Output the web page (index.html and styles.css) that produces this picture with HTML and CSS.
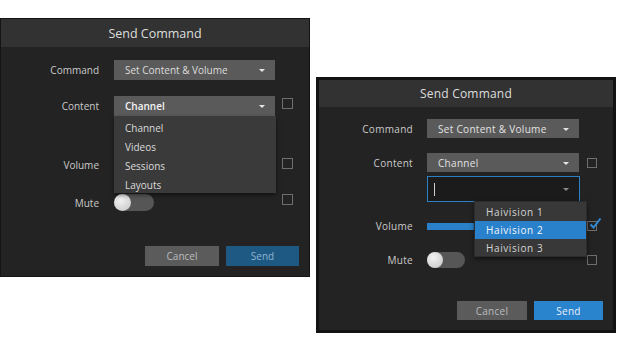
FILE: index.html
```html
<!DOCTYPE html>
<html lang="en">
<head>
    <meta charset="UTF-8">
    <meta name="viewport" content="width=device-width, initial-scale=1.0">
    <title>Send Command</title>
    <link rel="stylesheet" href="styles.css">
</head>
<body>
    <div class="page">
        <!-- content menu open -->
        <section class="dialog dialog-a">
            <header class="dialog-head">Send Command</header>
            <div class="dialog-body">
                <div class="row row-command">
                    <span class="row-label">Command</span>
                    <div class="select"><span>Set Content &amp; Volume</span><i class="caret"></i></div>
                </div>
                <div class="row row-content">
                    <span class="row-label">Content</span>
                    <div class="select select-open">
                        <span class="strong">Channel</span><i class="caret"></i>
                        <ul class="menu">
                            <li>Channel</li>
                            <li>Videos</li>
                            <li>Sessions</li>
                            <li>Layouts</li>
                        </ul>
                    </div>
                    <span class="check"></span>
                </div>
                <div class="row row-sub">
                    <span></span>
                    <div class="combo"></div>
                </div>
                <div class="row row-volume">
                    <span class="row-label">Volume</span>
                    <div class="slider"></div>
                    <span class="check"></span>
                </div>
                <div class="row row-mute">
                    <span class="row-label">Mute</span>
                    <div class="toggle"><i class="knob"></i></div>
                    <span class="check"></span>
                </div>
                <div class="actions">
                    <button class="btn btn-cancel">Cancel</button>
                    <button class="btn btn-send">Send</button>
                </div>
            </div>
        </section>

        <!-- channel picker open -->
        <section class="dialog dialog-b">
            <header class="dialog-head">Send Command</header>
            <div class="dialog-body">
                <div class="row row-command">
                    <span class="row-label">Command</span>
                    <div class="select"><span>Set Content &amp; Volume</span><i class="caret"></i></div>
                </div>
                <div class="row row-content">
                    <span class="row-label">Content</span>
                    <div class="select"><span>Channel</span><i class="caret"></i></div>
                    <span class="check"></span>
                </div>
                <div class="row row-sub">
                    <span></span>
                    <div class="combo combo-focus">
                        <i class="cursor"></i><i class="caret caret-dim"></i>
                        <ul class="menu menu-small">
                            <li>Haivision 1</li>
                            <li class="active">Haivision 2</li>
                            <li>Haivision 3</li>
                        </ul>
                    </div>
                </div>
                <div class="row row-volume">
                    <span class="row-label">Volume</span>
                    <div class="slider slider-on"></div>
                    <span class="check checked">
                        <svg width="14" height="14" viewBox="0 0 14 14"><path d="M2.5 7.5 L5.5 10.5 L12.5 1.5" fill="none" stroke="#2f8ad6" stroke-width="2"/></svg>
                    </span>
                </div>
                <div class="row row-mute">
                    <span class="row-label">Mute</span>
                    <div class="toggle"><i class="knob"></i></div>
                    <span class="check"></span>
                </div>
                <div class="actions">
                    <button class="btn btn-cancel">Cancel</button>
                    <button class="btn btn-send">Send</button>
                </div>
            </div>
        </section>
    </div>
</body>
</html>
```

FILE: styles.css
```css
body {
    margin: 0;
    background: #fff;
    font-family: "Open Sans", "DejaVu Sans", sans-serif;
}
.page {
    display: flex;
    align-items: flex-start;
    gap: 6px;
    padding-top: 18px;
}
.dialog {
    box-sizing: border-box;
    display: flex;
    flex-direction: column;
    background: #232323;
    color: #c8c8c8;
}
.dialog-a {
    width: 310px;
    height: 259px;
    border: 1px solid #141414;
    --label-w: 113px;
    --label-pad: 15px;
    --ctl-w: 161px;
    --ctl-h: 20px;
    --box: 11px;
    --box-gap: 7px;
    --box-top: 2px;
}
.dialog-b {
    width: 300px;
    height: 256px;
    margin-top: 59px;
    border: 3px solid #131313;
    letter-spacing: 0.3px;
    --label-w: 108px;
    --label-pad: 14px;
    --ctl-w: 152px;
    --ctl-h: 19px;
    --box: 10px;
    --box-gap: 8px;
    --box-top: 5px;
}
.dialog-head {
    background: #323232;
    color: #dedede;
    text-align: center;
    font-size: 12.5px;
}
.dialog-a .dialog-head {
    height: 28px;
    line-height: 29px;
}
.dialog-b .dialog-head {
    height: 27px;
    line-height: 27px;
    font-size: 12px;
    letter-spacing: 0.2px;
}
.dialog-body {
    flex: 1;
    display: flex;
    flex-direction: column;
    font-size: 10px;
}
.dialog-a .dialog-body { padding-top: 13px; }
.dialog-b .dialog-body { padding-top: 12px; }

.row {
    display: grid;
    grid-template-columns: var(--label-w) var(--ctl-w) auto;
    align-items: center;
    height: var(--ctl-h);
}
.row-label {
    text-align: right;
    padding-right: var(--label-pad);
    color: #cacaca;
}
.check {
    align-self: start;
    position: relative;
    box-sizing: border-box;
    width: var(--box);
    height: var(--box);
    margin-top: var(--box-top);
    margin-left: var(--box-gap);
    border: 1px solid #6e6e6e;
}
.check svg {
    position: absolute;
    left: 0;
    top: -5px;
}

/* vertical rhythm per dialog */
.dialog-a .row-content { margin-top: 16px; }
.dialog-a .row-sub { margin-top: 4px; height: 26px; }
.dialog-a .row-volume { margin-top: 9px; }
.dialog-a .row-volume .check { margin-top: 3px; }
.dialog-a .row-mute { margin-top: 18px; height: 19px; }
.dialog-a .row-mute .check { margin-top: 1px; }
.dialog-a .actions { margin-top: 34px; height: 20px; }
.dialog-a .actions .btn-cancel { width: 74px; }
.dialog-a .actions .btn-send { width: 73px; }

.dialog-b .row-content { margin-top: 15px; }
.dialog-b .row-sub { margin-top: 4px; height: 26px; }
.dialog-b .row-volume { margin-top: 14px; height: 20px; }
.dialog-b .row-mute { margin-top: 14px; height: 20px; }
.dialog-b .actions { margin-top: 31px; height: 19px; }
.dialog-b .actions .btn-cancel { width: 70px; }
.dialog-b .actions .btn-send { width: 69px; }

.select {
    position: relative;
    height: var(--ctl-h);
    display: flex;
    align-items: center;
    padding-left: 11px;
    background: #5a5a5a;
    color: #dcdcdc;
}
.dialog-b .select { color: #e2e2e2; }
.select .strong {
    font-weight: 600;
    color: #f4f4f4;
}
.caret {
    position: absolute;
    right: 10px;
    top: 50%;
    margin-top: -1px;
    border-left: 3px solid transparent;
    border-right: 3px solid transparent;
    border-top: 3px solid #e6e6e6;
}
.caret-dim { border-top-color: #8a8a8a; }

.combo {
    position: relative;
    box-sizing: border-box;
    height: 26px;
}
.combo-focus {
    width: 153px;
    background: #1b1b1b;
    border: 1px solid #2b7fc2;
}
.cursor {
    position: absolute;
    left: 6px;
    top: 6px;
    width: 1px;
    height: 13px;
    background: #cfcfcf;
}

.menu {
    position: absolute;
    z-index: 2;
    margin: 0;
    padding: 3px 0 0;
    list-style: none;
    background: #3a3a3a;
    box-shadow: 0 2px 4px rgba(0, 0, 0, 0.5);
}
.select-open .menu {
    left: 0;
    top: 100%;
    width: 162px;
    height: 77px;
    box-sizing: border-box;
}
.menu li {
    height: 19px;
    line-height: 19px;
    padding-left: 11px;
    color: #dadada;
}
.menu-small {
    left: 46px;
    top: 24px;
    width: 113px;
    padding: 1px 0 0;
    background: #383838;
    border: 1px solid #2c2c2c;
    box-sizing: border-box;
    height: 56px;
}
.menu-small li {
    height: 18px;
    line-height: 18px;
    padding-left: 11px;
    letter-spacing: 0.6px;
    color: #d4d4d4;
}
.menu-small li.active {
    background: #2a81cb;
    color: #f2f6fa;
}

.slider {
    height: 7px;
    background: #444;
}
.slider-on { background: #2a80c9; }

.toggle {
    position: relative;
    width: 40px;
    height: 17px;
    border-radius: 9px;
    background: #565656;
}
.dialog-b .toggle {
    width: 38px;
    height: 16px;
    border-radius: 8px;
}
.knob {
    position: absolute;
    left: 0;
    top: 0;
    width: 17px;
    height: 17px;
    border-radius: 50%;
    background: radial-gradient(circle at 40% 35%, #f2f2f2, #c4c4c4);
}
.dialog-b .knob {
    width: 16px;
    height: 16px;
}

.actions {
    display: flex;
    justify-content: flex-end;
    gap: 7px;
    padding-right: 10px;
}
.btn {
    border: none;
    padding: 0;
    height: 100%;
    font-family: inherit;
    font-size: 10px;
    letter-spacing: inherit;
    cursor: pointer;
}
.btn-cancel {
    background: #5b5b5b;
    color: #bcbcbc;
}
.btn-send {
    background: #1d5983;
    color: #8fb4cf;
}
.dialog-b .btn-send {
    background: #2a83cd;
    color: #e8f1fa;
}
```
